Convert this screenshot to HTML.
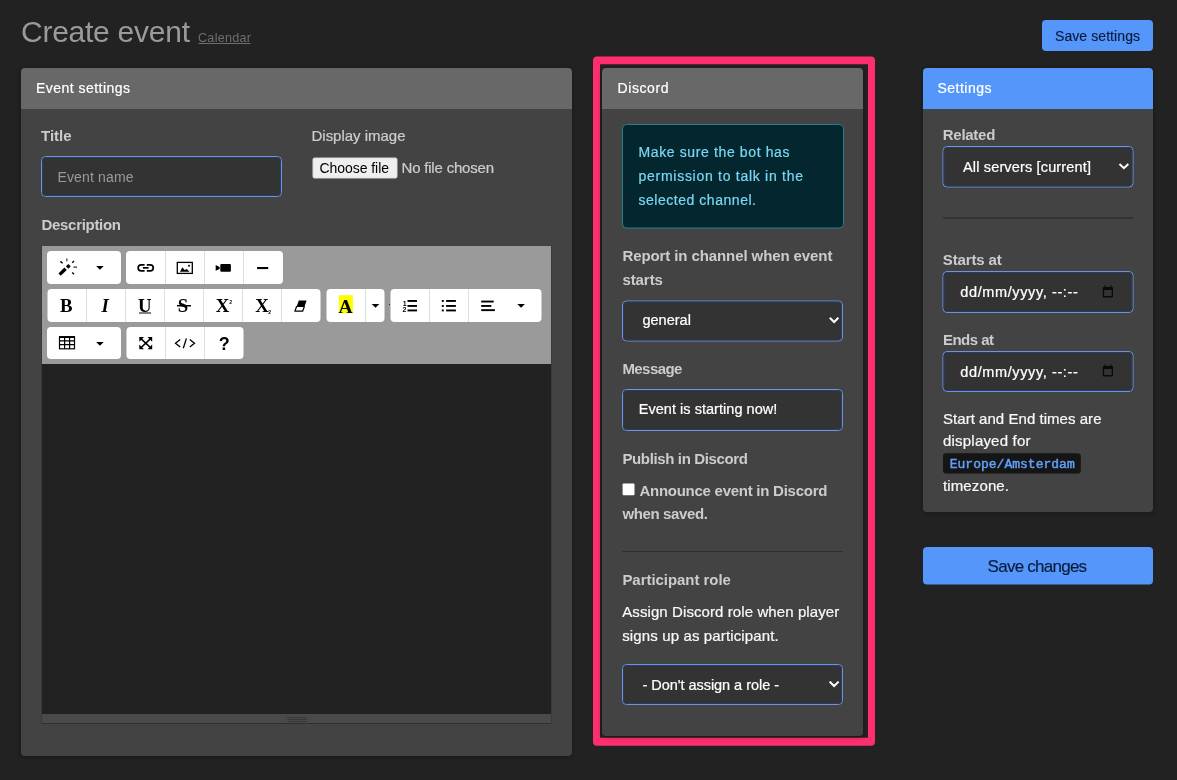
<!DOCTYPE html>
<html><head><meta charset="utf-8"><style>
html,body{margin:0;padding:0;background:#222;width:1177px;height:780px;overflow:hidden}
svg{display:block;will-change:transform;font-family:"Liberation Sans", sans-serif}
</style></head><body>
<svg width="1177" height="780" viewBox="0 0 1177 780">
<rect x="0" y="0" width="1177" height="780" fill="#222222"/>
<defs><filter id="sh" x="-5%" y="-5%" width="110%" height="110%"><feGaussianBlur stdDeviation="2"/></filter></defs>
<text x="21" y="42.4" font-size="30" fill="#9a9a9a" font-weight="normal" textLength="169" lengthAdjust="spacing">Create event</text>
<rect x="198.5" y="43" width="52" height="1" fill="#6e6e6e"/>
<text x="198" y="41.8" font-size="12.6" fill="#6e6e6e" font-weight="normal" textLength="53" lengthAdjust="spacing">Calendar</text>
<rect x="1042" y="20" width="111" height="31" fill="#5596fa" rx="4"/>
<text x="1055" y="40.7" font-size="14" fill="#0b1b3e" font-weight="normal" textLength="85" lengthAdjust="spacing" stroke="#0b1b3e" stroke-width="0.15">Save settings</text>
<rect x="20" y="68" width="553" height="690" rx="5" fill="#000" opacity="0.22" filter="url(#sh)"/>
<path d="M25,68 H568 Q572,68 572,72 V109 H21 V72 Q21,68 25,68 Z" fill="#686868"/>
<path d="M21,109 H572 V752 Q572,756 568,756 H25 Q21,756 21,752 Z" fill="#434343"/>
<text x="36" y="92.8" font-size="14" fill="#ffffff" font-weight="normal" textLength="94" lengthAdjust="spacing" stroke="#ffffff" stroke-width="0.22">Event settings</text>
<text x="41" y="141.3" font-size="15" fill="#cccccc" font-weight="bold" textLength="30.5" lengthAdjust="spacing">Title</text>
<rect x="41.5" y="156.5" width="240" height="40" fill="#333333" rx="4" stroke="#7393d2" stroke-width="1"/>
<rect x="42.5" y="157.5" width="238" height="38" rx="3" fill="none" stroke="#253d6c" stroke-width="0.9"/>
<text x="57.5" y="182" font-size="14" fill="#9a9a9a" font-weight="normal" textLength="76" lengthAdjust="spacing">Event name</text>
<text x="311.5" y="141.2" font-size="15" fill="#cccccc" font-weight="normal" textLength="94" lengthAdjust="spacing" stroke="#cccccc" stroke-width="0.22">Display image</text>
<rect x="313" y="158" width="84" height="20" fill="#efefef" rx="1.5" stroke="#d9d9d9" stroke-width="1"/>
<text x="319.5" y="172.8" font-size="14" fill="#000000" font-weight="normal" textLength="69.5" lengthAdjust="spacing">Choose file</text>
<text x="401.5" y="172.7" font-size="15" fill="#cccccc" font-weight="normal" textLength="92.5" lengthAdjust="spacing" stroke="#cccccc" stroke-width="0.22">No file chosen</text>
<text x="41.5" y="230" font-size="15" fill="#cccccc" font-weight="bold" textLength="79.5" lengthAdjust="spacing">Description</text>
<rect x="41.5" y="246" width="510" height="478" fill="#333333"/>
<rect x="42" y="246" width="509" height="118" fill="#9a9a9a"/>
<rect x="42" y="364" width="509" height="350" fill="#222222"/>
<rect x="42" y="714" width="509" height="9" fill="#4a4a4a"/>
<rect x="42" y="723" width="509" height="1" fill="#2f2f2f"/>
<g fill="#373737"><rect x="287.4" y="717" width="19.6" height="1"/><rect x="287.4" y="719" width="19.6" height="1"/><rect x="287.4" y="721" width="19.6" height="1"/></g>
<rect x="47" y="251" width="74" height="33" fill="#ffffff" rx="4"/>
<rect x="126" y="251" width="157" height="33" fill="#ffffff" rx="4"/>
<rect x="165" y="251" width="1" height="33" fill="#dedede"/>
<rect x="204" y="251" width="1" height="33" fill="#dedede"/>
<rect x="243" y="251" width="1" height="33" fill="#dedede"/>
<rect x="47.5" y="289" width="273" height="33" fill="#ffffff" rx="4"/>
<rect x="86" y="289" width="1" height="33" fill="#dedede"/>
<rect x="125" y="289" width="1" height="33" fill="#dedede"/>
<rect x="164" y="289" width="1" height="33" fill="#dedede"/>
<rect x="203" y="289" width="1" height="33" fill="#dedede"/>
<rect x="242" y="289" width="1" height="33" fill="#dedede"/>
<rect x="281" y="289" width="1" height="33" fill="#dedede"/>
<rect x="326.5" y="289" width="58" height="33" fill="#ffffff" rx="4"/>
<rect x="365" y="289" width="1" height="33" fill="#dedede"/>
<rect x="390.5" y="289" width="151" height="33" fill="#ffffff" rx="4"/>
<rect x="429" y="289" width="1" height="33" fill="#dedede"/>
<rect x="468" y="289" width="1" height="33" fill="#dedede"/>
<rect x="47" y="327" width="74" height="32" fill="#ffffff" rx="4"/>
<rect x="126.5" y="327" width="117" height="32" fill="#ffffff" rx="4"/>
<rect x="165" y="327" width="1" height="32" fill="#dedede"/>
<rect x="204" y="327" width="1" height="32" fill="#dedede"/>
<g fill="#000">
<path d="M59.6,274.6 L65.6,268.8" stroke="#000" stroke-width="3.3"/>
<path d="M68.3,263.9 L70.7,266.3 L68.3,268.7 L65.9,266.3 Z"/>
<g stroke="#000" stroke-width="1.4" fill="none"><path d="M60.4,261.4 L62.6,263.2"/><path d="M72.2,262.8 L74,261.1"/><path d="M73.4,267.1 L77,267.1" stroke="#444"/><path d="M72.2,272.4 L74,274.2"/><path d="M66.8,258.4 L66.8,261.2" stroke="#555"/></g>
<path d="M96.10000000000001,266 H103.7 L99.9,269.8 Z"/>
<path d="M371.7,304 H379.3 L375.5,307.8 Z"/>
<path d="M517.3000000000001,303.9 H524.9 L521.1,307.7 Z"/>
<path d="M96.10000000000001,342 H103.7 L99.9,345.8 Z"/>
<g fill="none" stroke="#000" stroke-width="1.7"><path d="M144.6,264.8 H141.2 A3.05,3.05 0 0 0 141.2,270.9 H144.6"/><path d="M146.8,264.8 H150.2 A3.05,3.05 0 0 1 150.2,270.9 H146.8"/><path d="M142.9,267.85 H148.6"/></g>
<rect x="177.3" y="262.4" width="15" height="11" fill="none" stroke="#000" stroke-width="1.3"/>
<path d="M180,271.8 L182.4,267.2 L184.6,270 L186.9,268.9 L189.5,271.8 Z"/><circle cx="189" cy="265.7" r="1"/>
<path d="M215.7,265.1 L219.6,267 L219.6,269 L215.7,270.8 Z"/><rect x="220.3" y="263.9" width="10.6" height="7.9" rx="1"/>
<rect x="257.1" y="267" width="11.1" height="2.1"/>
</g>
<text x="60" y="312.2" font-size="18.8" fill="#000" font-weight="bold" font-family='"Liberation Serif", serif'>B</text>
<text x="101.6" y="312.2" font-size="18.8" fill="#000" font-weight="bold" font-family='"Liberation Serif", serif' font-style="italic">I</text>
<text x="138" y="312.2" font-size="18.8" fill="#000" font-weight="bold" font-family='"Liberation Serif", serif'>U</text>
<rect x="139" y="312.5" width="12" height="1" fill="#000"/>
<text x="177.8" y="312.2" font-size="18.8" fill="#000" font-weight="bold" font-family='"Liberation Serif", serif'>S</text>
<rect x="177" y="305" width="14" height="1.5" fill="#000"/>
<text x="215.8" y="312.2" font-size="18.8" fill="#000" font-weight="bold" font-family='"Liberation Serif", serif'>X</text>
<text x="229.2" y="303.8" font-size="5" fill="#000" font-weight="bold">2</text>
<text x="255.3" y="312.2" font-size="18.8" fill="#000" font-weight="bold" font-family='"Liberation Serif", serif'>X</text>
<text x="268.2" y="313.9" font-size="5" fill="#000" font-weight="bold">2</text>
<path d="M298.8,300.6 H306.6 L304.6,306.2 H296.8 Z" fill="#000"/>
<path d="M296.6,306.5 H304.4 L302.6,311.2 H294.9 Z" fill="#fff" stroke="#000" stroke-width="1.2" stroke-linejoin="round"/>
<rect x="338.9" y="295.1" width="14" height="18.1" fill="#ffff00"/>
<text x="338.6" y="312.9" font-size="19.5" fill="#000" font-weight="bold" font-family='"Liberation Serif", serif'>A</text>
<rect x="389" y="304" width="1" height="1" fill="#333"/>
<g fill="#000">
<rect x="407.5" y="300.0" width="9.5" height="1.9"/>
<rect x="446.1" y="300.0" width="9.8" height="1.9"/>
<rect x="441.8" y="300.0" width="2" height="1.9"/>
<rect x="407.5" y="305.0" width="9.5" height="1.9"/>
<rect x="446.1" y="305.0" width="9.8" height="1.9"/>
<rect x="441.8" y="305.0" width="2" height="1.9"/>
<rect x="407.5" y="309.5" width="9.5" height="1.9"/>
<rect x="446.1" y="309.5" width="9.8" height="1.9"/>
<rect x="441.8" y="309.5" width="2" height="1.9"/>
<rect x="481.2" y="300.6" width="12.5" height="1.9"/><rect x="481.2" y="305" width="10.1" height="1.9"/><rect x="481.2" y="309.2" width="13.7" height="1.9"/>
</g>
<text x="402.8" y="305.5" font-size="7" fill="#000" font-weight="bold">1</text>
<text x="402.6" y="311.5" font-size="7" fill="#000" font-weight="bold">2</text>
<g fill="none" stroke="#000" stroke-width="1.2"><rect x="59.5" y="336.8" width="15" height="12"/><path d="M64.6,336.8 V348.8 M69.6,336.8 V348.8 M59.5,340.9 H74.5 M59.5,344.6 H74.5"/></g>
<rect x="59" y="336.2" width="16" height="1.8" fill="#000"/>
<g stroke="#000" stroke-width="1.6" fill="none"><path d="M140.6,338.3 L150.9,348 M150.9,338.3 L140.6,348"/></g>
<g fill="#000"><path d="M139.3,337 H144 L139.3,341.7 Z"/><path d="M152.2,337 H147.5 L152.2,341.7 Z"/><path d="M139.3,349.2 H144 L139.3,344.5 Z"/><path d="M152.2,349.2 H147.5 L152.2,344.5 Z"/></g>
<g stroke="#000" stroke-width="1.3" fill="none"><path d="M180.2,339.6 L175.5,343.3 L180.2,347"/><path d="M189.8,339.6 L194.5,343.3 L189.8,347"/><path d="M186.4,338.4 L183.3,348.2"/></g>
<text x="218.7" y="349.6" font-size="18" fill="#000" font-weight="bold">?</text>
<path fill-rule="evenodd" fill="#ff2e6e" d="M597,56.6 H871 Q875,56.6 875,60.6 V741.8 Q875,745.8 871,745.8 H597 Q593,745.8 593,741.8 V60.6 Q593,56.6 597,56.6 Z M600,64.2 V737.8 H868 V64.2 Z"/>
<rect x="601" y="68" width="263" height="670" rx="5" fill="#000" opacity="0.22" filter="url(#sh)"/>
<path d="M606,68 H859 Q863,68 863,72 V109 H602 V72 Q602,68 606,68 Z" fill="#686868"/>
<path d="M602,109 H863 V732 Q863,736 859,736 H606 Q602,736 602,732 Z" fill="#434343"/>
<text x="617.5" y="92.8" font-size="14" fill="#ffffff" font-weight="normal" textLength="51" lengthAdjust="spacing" stroke="#ffffff" stroke-width="0.22">Discord</text>
<rect x="622.5" y="124.5" width="221" height="103.5" fill="#03262f" rx="4" stroke="#2d7c8d" stroke-width="1"/>
<text x="638.5" y="157.1" font-size="14" fill="#78d8f3" font-weight="normal" textLength="151" lengthAdjust="spacing" stroke="#78d8f3" stroke-width="0.22">Make sure the bot has</text>
<text x="638.5" y="180.9" font-size="14" fill="#78d8f3" font-weight="normal" textLength="164.5" lengthAdjust="spacing" stroke="#78d8f3" stroke-width="0.22">permission to talk in the</text>
<text x="638.5" y="204.7" font-size="14" fill="#78d8f3" font-weight="normal" textLength="117.5" lengthAdjust="spacing" stroke="#78d8f3" stroke-width="0.22">selected channel.</text>
<text x="622.4" y="260.9" font-size="15" fill="#cccccc" font-weight="bold" textLength="210" lengthAdjust="spacing">Report in channel when event</text>
<text x="622.4" y="284.9" font-size="15" fill="#cccccc" font-weight="bold" textLength="40.5" lengthAdjust="spacing">starts</text>
<rect x="622.5" y="301" width="220" height="40" fill="#333333" rx="4" stroke="#7393d2" stroke-width="1"/>
<rect x="623.5" y="302" width="218" height="38" rx="3" fill="none" stroke="#253d6c" stroke-width="0.9"/>
<text x="642.4" y="325.4" font-size="14.5" fill="#ffffff" font-weight="normal" textLength="48.5" lengthAdjust="spacing" stroke="#ffffff" stroke-width="0.22">general</text>
<text x="622.4" y="373.9" font-size="15" fill="#cccccc" font-weight="bold" textLength="60" lengthAdjust="spacing">Message</text>
<rect x="622.5" y="389.5" width="220" height="41" fill="#333333" rx="4" stroke="#7393d2" stroke-width="1"/>
<rect x="623.5" y="390.5" width="218" height="39" rx="3" fill="none" stroke="#253d6c" stroke-width="0.9"/>
<text x="638.8" y="414.3" font-size="14.5" fill="#ffffff" font-weight="normal" textLength="138.5" lengthAdjust="spacing" stroke="#ffffff" stroke-width="0.22">Event is starting now!</text>
<text x="622.4" y="464" font-size="15" fill="#cccccc" font-weight="bold" textLength="125.5" lengthAdjust="spacing">Publish in Discord</text>
<rect x="622.6" y="483.5" width="11.9" height="11.8" fill="#ffffff" rx="1"/>
<text x="639.4" y="495.8" font-size="15" fill="#cccccc" font-weight="bold" textLength="188" lengthAdjust="spacing">Announce event in Discord</text>
<text x="622.4" y="519.3" font-size="15" fill="#cccccc" font-weight="bold" textLength="85.5" lengthAdjust="spacing">when saved.</text>
<rect x="622" y="551" width="221" height="1" fill="#2f2f2f"/>
<text x="622.4" y="585" font-size="15" fill="#cccccc" font-weight="bold" textLength="108.5" lengthAdjust="spacing">Participant role</text>
<text x="622.2" y="616.8" font-size="15" fill="#f8f8f8" font-weight="normal" textLength="217" lengthAdjust="spacing" stroke="#f8f8f8" stroke-width="0.22">Assign Discord role when player</text>
<text x="622.2" y="640.6" font-size="15" fill="#f8f8f8" font-weight="normal" textLength="156.5" lengthAdjust="spacing" stroke="#f8f8f8" stroke-width="0.22">signs up as participant.</text>
<rect x="622.5" y="664.5" width="220" height="40" fill="#333333" rx="4" stroke="#7393d2" stroke-width="1"/>
<rect x="623.5" y="665.5" width="218" height="38" rx="3" fill="none" stroke="#253d6c" stroke-width="0.9"/>
<text x="642.5" y="690" font-size="14.5" fill="#ffffff" font-weight="normal" textLength="136.5" lengthAdjust="spacing" stroke="#ffffff" stroke-width="0.22">- Don't assign a role -</text>
<rect x="922" y="68" width="232" height="446" rx="5" fill="#000" opacity="0.22" filter="url(#sh)"/>
<path d="M927,68 H1149 Q1153,68 1153,72 V109 H923 V72 Q923,68 927,68 Z" fill="#5596fa"/>
<path d="M923,109 H1153 V508 Q1153,512 1149,512 H927 Q923,512 923,508 Z" fill="#434343"/>
<text x="937.5" y="92.8" font-size="14" fill="#ffffff" font-weight="normal" textLength="54" lengthAdjust="spacing" stroke="#ffffff" stroke-width="0.22">Settings</text>
<text x="942.8" y="139.6" font-size="15" fill="#cccccc" font-weight="bold" textLength="52.5" lengthAdjust="spacing">Related</text>
<rect x="943" y="146.5" width="190" height="40.5" fill="#333333" rx="4" stroke="#7393d2" stroke-width="1"/>
<rect x="944" y="147.5" width="188" height="38.5" rx="3" fill="none" stroke="#253d6c" stroke-width="0.9"/>
<text x="963" y="172.2" font-size="14.5" fill="#ffffff" font-weight="normal" textLength="128" lengthAdjust="spacing" stroke="#ffffff" stroke-width="0.22">All servers [current]</text>
<rect x="943" y="217" width="190" height="2" fill="#333333"/>
<text x="942.8" y="264.8" font-size="15" fill="#cccccc" font-weight="bold" textLength="59" lengthAdjust="spacing">Starts at</text>
<rect x="943" y="271.5" width="190" height="41" fill="#333333" rx="4" stroke="#7393d2" stroke-width="1"/>
<rect x="944" y="272.5" width="188" height="39" rx="3" fill="none" stroke="#253d6c" stroke-width="0.9"/>
<text x="960.3" y="296.9" font-size="14.5" fill="#ffffff" font-weight="normal" textLength="117.5" lengthAdjust="spacing" stroke="#ffffff" stroke-width="0.22">dd/mm/yyyy, --:--</text>
<text x="943" y="344.7" font-size="15" fill="#cccccc" font-weight="bold" textLength="51" lengthAdjust="spacing">Ends at</text>
<rect x="943" y="351.5" width="190" height="40" fill="#333333" rx="4" stroke="#7393d2" stroke-width="1"/>
<rect x="944" y="352.5" width="188" height="38" rx="3" fill="none" stroke="#253d6c" stroke-width="0.9"/>
<text x="960.3" y="377.3" font-size="14.5" fill="#ffffff" font-weight="normal" textLength="117.5" lengthAdjust="spacing" stroke="#ffffff" stroke-width="0.22">dd/mm/yyyy, --:--</text>
<text x="943" y="424.2" font-size="15" fill="#f8f8f8" font-weight="normal" textLength="158.5" lengthAdjust="spacing" stroke="#f8f8f8" stroke-width="0.22">Start and End times are</text>
<text x="943" y="445.7" font-size="15" fill="#f8f8f8" font-weight="normal" textLength="87.5" lengthAdjust="spacing" stroke="#f8f8f8" stroke-width="0.22">displayed for</text>
<rect x="943" y="453.3" width="137.8" height="20.2" fill="#151515" rx="3"/>
<text x="949.7" y="468.1" font-size="13" fill="#62a0fa" font-weight="normal" font-family='"Liberation Mono", monospace' textLength="125" lengthAdjust="spacing" stroke="#62a0fa" stroke-width="0.45">Europe/Amsterdam</text>
<text x="943" y="490.6" font-size="15" fill="#f8f8f8" font-weight="normal" textLength="66" lengthAdjust="spacing" stroke="#f8f8f8" stroke-width="0.22">timezone.</text>
<rect x="923" y="547" width="230" height="37.5" fill="#5596fa" rx="4"/>
<text x="987.6" y="572.2" font-size="17" fill="#0b1b3e" font-weight="normal" textLength="99.5" lengthAdjust="spacing" stroke="#0b1b3e" stroke-width="0.15">Save changes</text>
<path d="M1120.2,164.7 L1123.9,168.20000000000002 L1127.6,164.7" fill="none" stroke="#fff" stroke-width="2" stroke-linecap="square"/>
<path d="M830.5,318.5 L834.0999999999999,322.0 L837.6999999999999,318.5" fill="none" stroke="#fff" stroke-width="2" stroke-linecap="square"/>
<path d="M830.3000000000001,682.3000000000001 L834.1,686.0 L837.9,682.3000000000001" fill="none" stroke="#fff" stroke-width="2" stroke-linecap="square"/>
<g fill="#0a0a0a"><path fill-rule="evenodd" d="M1103.8,287.1 H1112.0 Q1113.0,287.1 1113.0,288.1 V296.40000000000003 Q1113.0,297.40000000000003 1112.0,297.40000000000003 H1103.8 Q1102.8,297.40000000000003 1102.8,296.40000000000003 V288.1 Q1102.8,287.1 1103.8,287.1 Z M1104.1,289.90000000000003 V296.1 H1111.7 V289.90000000000003 Z"/><rect x="1104.3999999999999" y="285.40000000000003" width="1.2" height="2"/><rect x="1110.2" y="285.40000000000003" width="1.2" height="2"/></g>
<g fill="#0a0a0a"><path fill-rule="evenodd" d="M1103.8,366.1 H1112.0 Q1113.0,366.1 1113.0,367.1 V375.40000000000003 Q1113.0,376.40000000000003 1112.0,376.40000000000003 H1103.8 Q1102.8,376.40000000000003 1102.8,375.40000000000003 V367.1 Q1102.8,366.1 1103.8,366.1 Z M1104.1,368.90000000000003 V375.1 H1111.7 V368.90000000000003 Z"/><rect x="1104.3999999999999" y="364.40000000000003" width="1.2" height="2"/><rect x="1110.2" y="364.40000000000003" width="1.2" height="2"/></g>
</svg>
</body></html>
